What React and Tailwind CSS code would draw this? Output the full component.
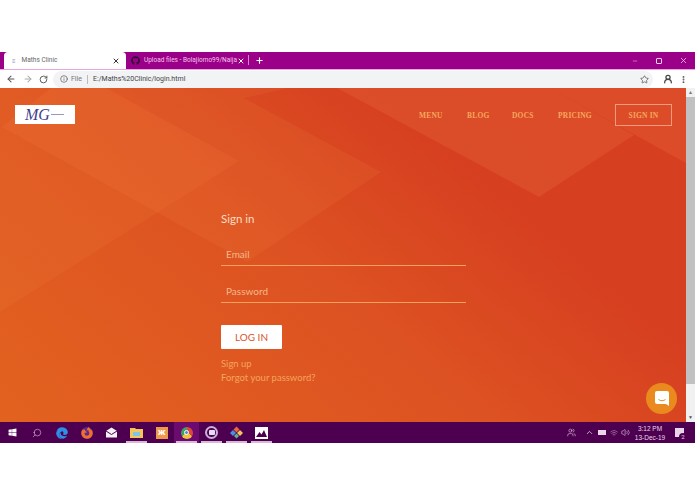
import React from "react";
import { ArrowLeft, ArrowRight, ChevronUp, EllipsisVertical, Info, Minus, Plus, RotateCw, Search, Star, UserRound, Users, Volume2, Wifi, X } from "lucide-react";
import { FaEdge, FaFirefoxBrowser, FaGithub, FaWindows } from "react-icons/fa";

const NAV_LINKS = [
  { label: "MENU", width: "w-[48px]" },
  { label: "BLOG", width: "w-[45px]" },
  { label: "DOCS", width: "w-[46px]" },
  { label: "PRICING", width: "w-[57px]" },
];

function TabBar() {
  return (
    <div className="flex h-[17px] items-end bg-[#9b0088] text-[6.5px]">
      <div className="h-full w-[4px] rounded-br-[4px] bg-[#9b0088]" />
      <div className="flex h-full w-[122px] items-center rounded-t-[4px] bg-white pl-[8px] pr-[6px] text-[#666]">
        <span className="mr-[6px] text-[6px] text-[#8a8fc0]">≡</span>
        <span>Maths Clinic</span>
        <X className="ml-auto text-[#333]" size={8} strokeWidth={3} />
      </div>
      <div className="flex h-full w-[122px] items-center pl-[5px] pr-[4px] text-[#f3c4ea]">
        <FaGithub className="mr-[4px] shrink-0 text-[#2b1030]" size={9} />
        <span className="whitespace-nowrap">Upload files - Bolajiomo99/Naija</span>
        <X className="ml-auto shrink-0 text-white" size={8} strokeWidth={3} />
      </div>
      <div className="mb-[4px] h-[10px] w-px bg-[#d486c8]" />
      <Plus className="mb-[4px] ml-[6px] text-white" size={9} strokeWidth={3} />
      <div className="ml-auto flex h-full items-center pr-[7px] text-[#f0d0ea]">
        <Minus size={6} strokeWidth={2} />
        <div className="ml-[18px] h-[6px] w-[6px] rounded-[1px] border border-[#f0d0ea]" />
        <X className="ml-[17px]" size={9} strokeWidth={2} />
      </div>
    </div>
  );
}

function Toolbar() {
  return (
    <div className="flex h-[19px] items-center border-t border-[#e9a5de] bg-white pl-[6px] pr-[7px] text-[#555]">
      <ArrowLeft size={10} strokeWidth={2.5} />
      <ArrowRight className="ml-[7px] text-[#aaa]" size={10} strokeWidth={2.5} />
      <RotateCw className="ml-[6px]" size={9} strokeWidth={2.5} />
      <div className="ml-[5px] flex h-[17px] flex-1 items-center rounded-full bg-[#f1f3f4] pl-[7px] pr-[4px] text-[7px]">
        <Info size={8} strokeWidth={2} />
        <span className="ml-[3px] text-[#777]">File</span>
        <div className="mx-[5px] h-[9px] w-px bg-[#bbb]" />
        <span className="text-[#444]">E:/Maths%20Clinic/login.html</span>
        <Star className="ml-auto" size={9} strokeWidth={2} />
      </div>
      <UserRound className="ml-[10px] text-[#444]" size={10} strokeWidth={3} />
      <EllipsisVertical className="ml-[6px]" size={9} strokeWidth={3} />
    </div>
  );
}

function Backdrop() {
  return (
    <svg className="absolute inset-0 h-full w-full" viewBox="0 0 686 334" preserveAspectRatio="none" aria-hidden="true">
      <polygon points="0,0 106,0 239,73 0,224" fill="#ff9a50" fillOpacity="0.09" />
      <polygon points="51,0 288,0 244,10 381,84 247,174 2,39" fill="#ff9a50" fillOpacity="0.1" />
      <polygon points="337,0 550,0 634,47 539,109" fill="#ff9a5a" fillOpacity="0.14" />
      <polygon points="550,0 686,0 686,75" fill="#ff9a5a" fillOpacity="0.15" />
    </svg>
  );
}

function Navbar() {
  return (
    <nav className="relative flex items-start pl-[15px] pr-[14px] pt-[16px]">
      <div className="mt-px flex h-[19px] w-[60px] items-center bg-white pl-[10px] text-[#3f3f8f]">
        <span className="font-['Liberation_Serif',serif] text-[16px] italic leading-none">MG</span>
        <span className="ml-px h-px w-[13px] bg-[#9a9ab8]" />
      </div>
      <div className="ml-auto flex items-center font-['Liberation_Serif',serif] text-[7.5px] font-bold tracking-[0.2px] text-[#f7a75e]">
        {NAV_LINKS.map((link) => (
          <a key={link.label} className={`${link.width} pt-px`}>{link.label}</a>
        ))}
        <a className="flex h-[22px] w-[57px] items-center justify-center border border-[#f29a80] pt-px text-[#f7a75e]">SIGN IN</a>
      </div>
    </nav>
  );
}

function LoginForm() {
  return (
    <div className="relative ml-[221px] mt-[85px] flex w-[245px] flex-col font-['Lato',sans-serif]">
      <h1 className="text-[11.5px] leading-[16px] text-[#fbdcc4]">Sign in</h1>
      <div className="mt-[20px] h-[19px] border-b border-[#f5a05c] pl-[5px] text-[10px] leading-[14px] text-[#f5b98a]">Email</div>
      <div className="mt-[18px] h-[19px] border-b border-[#f5a05c] pl-[5px] text-[10px] leading-[14px] text-[#f5b98a]">Password</div>
      <button className="mt-[22px] h-[24px] w-[61px] rounded-[1px] bg-white text-[10px] text-[#d9552b]">LOG IN</button>
      <a className="mt-[8px] text-[9.5px] leading-[14px] text-[#f4a45e]">Sign up</a>
      <a className="text-[9.5px] leading-[14px] text-[#f4a45e]">Forgot your password?</a>
    </div>
  );
}

function Scrollbar() {
  return (
    <div className="flex w-[9px] flex-col bg-[#f1f1f1]">
      <div className="h-[9px] text-center text-[5px] leading-[9px] text-[#777]">▲</div>
      <div className="h-[287px] bg-[#c1c1c1]" />
      <div className="mt-auto h-[9px] text-center text-[5px] leading-[9px] text-[#555]">▼</div>
    </div>
  );
}

function ChatBubble() {
  return (
    <div className="absolute bottom-[8px] right-[9px] flex h-[31px] w-[31px] items-center justify-center rounded-full bg-[#ea8a1e]">
      <svg width="16" height="17" viewBox="0 0 16 17" aria-hidden="true">
        <path d="M3 1h10a2 2 0 0 1 2 2v13l-3-2H3a2 2 0 0 1-2-2V3a2 2 0 0 1 2-2z" fill="#fff" />
        <path d="M4.500 9.500c2 1.600 5 1.600 7 0" fill="none" stroke="#ea8a1e" strokeWidth="1" />
      </svg>
    </div>
  );
}

function TaskIcon({ active, underline, children }) {
  return (
    <div className={`relative flex h-[21px] w-[25px] items-center justify-center ${active ? "bg-[#6d0a70]" : ""}`}>
      {children}
      {underline && <div className="absolute bottom-0 left-[2px] right-[2px] h-[2px] bg-[#d9b8d8]" />}
    </div>
  );
}

function Taskbar() {
  return (
    <div className="flex h-[21px] items-center bg-[#4d0050] text-white">
      <div className="flex w-[25px] justify-center"><FaWindows size={9} /></div>
      <div className="flex w-[24px] justify-center text-[#d9b8d8]"><Search size={10} strokeWidth={1.5} className="-scale-x-100" /></div>
      <TaskIcon><FaEdge className="text-[#2f8fe8]" size={12} /></TaskIcon>
      <TaskIcon>
        <div className="flex h-[12px] w-[12px] items-center justify-center rounded-full bg-[#5a2a90]">
          <FaFirefoxBrowser className="text-[#f0702a]" size={12} />
        </div>
      </TaskIcon>
      <TaskIcon>
        <svg width="13" height="11" viewBox="0 0 13 11" aria-hidden="true">
          <path d="M1 4l5.500-3.500L12 4v6.500H1z" fill="#f4f0f4" />
          <path d="M1 4l5.500 3.500L12 4" fill="none" stroke="#4d0050" />
        </svg>
      </TaskIcon>
      <TaskIcon underline>
        <svg width="13" height="11" viewBox="0 0 13 11" aria-hidden="true">
          <path d="M0 1h5l1 1h7v9H0z" fill="#f2c65a" />
          <rect x="3" y="5" width="7" height="4" fill="#7cc4e8" />
        </svg>
      </TaskIcon>
      <TaskIcon>
        <div className="flex h-[12px] w-[12px] items-center justify-center bg-[#ef9a4a] text-[9px] font-bold leading-none text-white">ж</div>
      </TaskIcon>
      <TaskIcon active underline>
        <div className="flex h-[12px] w-[12px] items-center justify-center rounded-full bg-[conic-gradient(#d9483b_0deg_120deg,#f2c23c_120deg_240deg,#3fa35a_240deg_360deg)]">
          <div className="h-[5px] w-[5px] rounded-full border border-white bg-[#4a8fe0]" />
        </div>
      </TaskIcon>
      <TaskIcon underline>
        <div className="flex h-[13px] w-[13px] items-center justify-center rounded-full border-2 border-[#c9b0d8]">
          <div className="h-[5px] w-[6px] rounded-[1px] bg-[#e8dcf0]" />
        </div>
      </TaskIcon>
      <TaskIcon underline>
        <svg width="13" height="13" viewBox="0 0 13 13" aria-hidden="true">
          <path d="M6.500 0.500l3 3-3 3-3-3z" fill="#e8663a" />
          <path d="M3 4l3 3-3 3-3-3z" fill="#4a8fe0" />
          <path d="M10 4l3 3-3 3-3-3z" fill="#f2c65a" />
          <path d="M6.500 7.500l2.500 2.500-2.500 2.500-2.500-2.500z" fill="#5ab88a" />
        </svg>
      </TaskIcon>
      <TaskIcon underline>
        <svg width="13" height="12" viewBox="0 0 13 12" aria-hidden="true">
          <rect width="13" height="12" fill="#fff" />
          <path d="M1 10l3.500-5 2 2.500L9 3l3 7z" fill="#4d0050" />
        </svg>
      </TaskIcon>
      <div className="ml-auto flex items-center pr-[11px] text-[#e9d6e8]">
        <Users size={9} strokeWidth={1.5} />
        <ChevronUp className="ml-[9px]" size={9} strokeWidth={2} />
        <div className="ml-[4px] h-[5px] w-[8px] bg-[#e9d6e8]" />
        <Wifi className="ml-[4px] text-[#a88aa8]" size={8} strokeWidth={2} />
        <Volume2 className="ml-[3px]" size={9} strokeWidth={1.5} />
        <div className="ml-[3px] w-[34px] whitespace-nowrap text-center font-['Liberation_Sans',sans-serif] text-[6.5px] leading-[9px]">
          <div>3:12 PM</div>
          <div>13-Dec-19</div>
        </div>
        <div className="relative ml-[8px] h-[9px] w-[9px] bg-[#e9d6e8]">
          <span className="absolute -bottom-[4px] -right-[3px] flex h-[8px] w-[8px] items-center justify-center rounded-full bg-[#4d0050] text-[6px] leading-none">2</span>
        </div>
      </div>
    </div>
  );
}

export default function App() {
  return (
    <div className="flex h-[494px] w-[695px] flex-col overflow-hidden bg-white font-['Roboto',sans-serif]">
      <div className="h-[52px]" />
      <TabBar />
      <Toolbar />
      <div className="flex h-[334px]">
        <div className="relative flex-1 bg-[linear-gradient(40deg,#e2621f_0%,#dd5222_45%,#d63f20_72%,#d83f22_100%)]">
          <Backdrop />
          <Navbar />
          <LoginForm />
          <ChatBubble />
        </div>
        <Scrollbar />
      </div>
      <Taskbar />
    </div>
  );
}
